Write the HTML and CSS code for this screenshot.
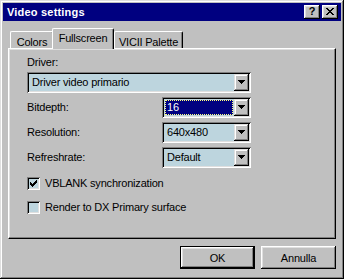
FILE: index.html
```html
<!DOCTYPE html>
<html>
<head>
<meta charset="utf-8">
<link rel="stylesheet" href="styles.css">
</head>
<body>
<div class="window">
  <div class="titlebar">
    <span class="title">Video settings</span>
    <span class="tb-btn help">?</span>
    <span class="tb-btn close">
      <svg width="8" height="7" viewBox="0 0 8 7"><path d="M0 0h2v1H0z M6 0h2v1H6z M1 1h2v1H1z M5 1h2v1H5z M2 2h4v1H2z M3 3h2v1H3z M2 4h4v1H2z M1 5h2v1H1z M5 5h2v1H5z M0 6h2v1H0z M6 6h2v1H6z" fill="#000"/></svg>
    </span>
  </div>
  <div class="content">
    <div class="tabs">
      <div class="tab tab-colors">Colors</div>
      <div class="tab tab-active">Fullscreen</div>
      <div class="tab tab-palette">VICII Palette</div>
    </div>
    <div class="panel">
      <div class="label">Driver:</div>
      <div class="combo combo-wide">
        <span class="value">Driver video primario</span>
        <span class="drop"><svg width="7" height="4" viewBox="0 0 7 4"><path d="M0 0h7v1H0z M1 1h5v1H1z M2 2h3v1H2z M3 3h1v1H3z" fill="#000"/></svg></span>
      </div>
      <div class="rows">
        <div class="row">
          <span class="label">Bitdepth:</span>
          <div class="combo combo-small">
            <span class="value selected">16</span>
            <span class="drop"><svg width="7" height="4" viewBox="0 0 7 4"><path d="M0 0h7v1H0z M1 1h5v1H1z M2 2h3v1H2z M3 3h1v1H3z" fill="#000"/></svg></span>
          </div>
        </div>
        <div class="row">
          <span class="label">Resolution:</span>
          <div class="combo combo-small">
            <span class="value">640x480</span>
            <span class="drop"><svg width="7" height="4" viewBox="0 0 7 4"><path d="M0 0h7v1H0z M1 1h5v1H1z M2 2h3v1H2z M3 3h1v1H3z" fill="#000"/></svg></span>
          </div>
        </div>
        <div class="row">
          <span class="label">Refreshrate:</span>
          <div class="combo combo-small">
            <span class="value">Default</span>
            <span class="drop"><svg width="7" height="4" viewBox="0 0 7 4"><path d="M0 0h7v1H0z M1 1h5v1H1z M2 2h3v1H2z M3 3h1v1H3z" fill="#000"/></svg></span>
          </div>
        </div>
      </div>
      <div class="checks">
        <div class="check">
          <span class="box"><svg width="7" height="7" viewBox="0 0 7 7"><path d="M6 0h1v1H6z M5 1h2v1H5z M0 2h1v1H0z M4 2h3v1H4z M0 3h2v1H0z M3 3h3v1H3z M0 4h5v1H0z M1 5h3v1H1z M2 6h1v1H2z" fill="#000"/></svg></span>
          <span>VBLANK synchronization</span>
        </div>
        <div class="check">
          <span class="box"></span>
          <span>Render to DX Primary surface</span>
        </div>
      </div>
    </div>
    <div class="buttons">
      <button class="btn btn-default">OK</button>
      <button class="btn">Annulla</button>
    </div>
  </div>
</div>
</body>
</html>
```
FILE: styles.css
```css
* { box-sizing: border-box; }
html, body { margin: 0; padding: 0; }
body {
  width: 344px;
  height: 279px;
  overflow: hidden;
  background: #c0c0c0;
  font-family: "Liberation Sans", Arial, sans-serif;
  font-size: 11px;
  letter-spacing: -0.2px;
  color: #000;
}
.window {
  width: 344px;
  height: 279px;
  padding: 3px;
  background: #c0c0c0;
  display: flex;
  flex-direction: column;
  box-shadow: inset -1px -1px #000, inset 1px 1px #dfdfdf, inset -2px -2px #808080, inset 2px 2px #fff;
}
.titlebar {
  height: 18px;
  background: #000080;
  display: flex;
  align-items: center;
  padding: 0 3px 0 4px;
}
.title {
  flex: 1;
  color: #fff;
  font-weight: bold;
  letter-spacing: 0.2px;
  line-height: 13px;
}
.tb-btn {
  width: 16px;
  height: 14px;
  background: #c0c0c0;
  display: flex;
  align-items: center;
  justify-content: center;
  box-shadow: inset -1px -1px #000, inset 1px 1px #fff, inset -2px -2px #808080, inset 2px 2px #dfdfdf;
}
.tb-btn + .tb-btn { margin-left: 2px; }
.help {
  font-weight: bold;
  font-size: 11px;
  line-height: 1;
  letter-spacing: 0;
  padding-bottom: 1px;
}
.close svg { display: block; margin-bottom: 1px; }
.content {
  flex: 1;
  padding: 7px 5px 0 5px;
  display: flex;
  flex-direction: column;
}
.tabs {
  display: flex;
  height: 20px;
  padding-left: 2px;
}
.tab {
  margin-top: 3px;
  height: 17px;
  padding-top: 4px;
  line-height: 13px;
  text-align: center;
  background: #c0c0c0;
  border-left: 1px solid #fff;
  border-top: 1px solid #fff;
  border-right: 1px solid #000;
  border-radius: 2px 2px 0 0;
  box-shadow: inset -1px 0 #808080;
}
.tab-colors { width: 44px; margin-right: -2px; }
.tab-active {
  width: 62px;
  height: 21px;
  margin-top: 0;
  padding-top: 3px;
  position: relative;
  z-index: 1;
}
.tab-palette { width: 69px; }
.panel {
  height: 191px;
  padding: 7px 0 0 18px;
  border-left: 1px solid #fff;
  border-top: 1px solid #fff;
  border-right: 1px solid #000;
  border-bottom: 1px solid #000;
  box-shadow: inset -1px -1px #808080, inset 1px 1px #dfdfdf;
}
.label { line-height: 13px; display: block; }
.combo {
  display: flex;
  height: 21px;
  padding: 2px;
  background: #bdd5de;
  box-shadow: inset 1px 1px #808080, inset -1px -1px #fff, inset 2px 2px #000, inset -2px -2px #dfdfdf;
}
.combo-wide { width: 224px; margin-top: 3px; }
.combo-small { width: 89px; }
.value {
  flex: 1;
  margin: 1px 1px 1px 1px;
  padding-left: 2px;
  display: flex;
  align-items: center;
  line-height: 13px;
  white-space: nowrap;
}
.value.selected {
  background: #000080;
  color: #fff;
  padding-left: 1px;
  border: 1px dotted #ffff80;
}
.drop {
  width: 15px;
  height: 17px;
  background: #c0c0c0;
  display: flex;
  align-items: center;
  justify-content: center;
  box-shadow: inset -1px -1px #000, inset 1px 1px #dfdfdf, inset -2px -2px #808080, inset 2px 2px #fff;
}
.drop svg { display: block; margin-bottom: 1px; }
.rows {
  margin-top: 4px;
  display: flex;
  flex-direction: column;
  gap: 4px;
}
.row { display: flex; align-items: center; }
.row .label { width: 135px; }
.checks {
  margin-top: 9px;
  display: flex;
  flex-direction: column;
  gap: 11px;
}
.check {
  display: flex;
  align-items: center;
  height: 13px;
  line-height: 13px;
}
.box {
  width: 13px;
  height: 13px;
  margin-right: 5px;
  background: #bdd5de;
  display: flex;
  align-items: center;
  justify-content: center;
  box-shadow: inset 1px 1px #808080, inset -1px -1px #fff, inset 2px 2px #000, inset -2px -2px #dfdfdf;
}
.box svg { display: block; }
.buttons {
  margin-top: 7px;
  display: flex;
  justify-content: flex-end;
  gap: 6px;
}
.btn {
  width: 75px;
  height: 23px;
  border: none;
  padding: 0;
  background: #c0c0c0;
  font-family: "Liberation Sans", Arial, sans-serif;
  font-size: 11px;
  letter-spacing: -0.2px;
  color: #000;
  box-shadow: inset -1px -1px #000, inset 1px 1px #fff, inset -2px -2px #808080, inset 2px 2px #dfdfdf;
}
.btn-default {
  box-shadow: inset 0 0 0 1px #000, inset -2px -2px #000, inset 2px 2px #fff, inset -3px -3px #808080, inset 3px 3px #dfdfdf;
}
```
